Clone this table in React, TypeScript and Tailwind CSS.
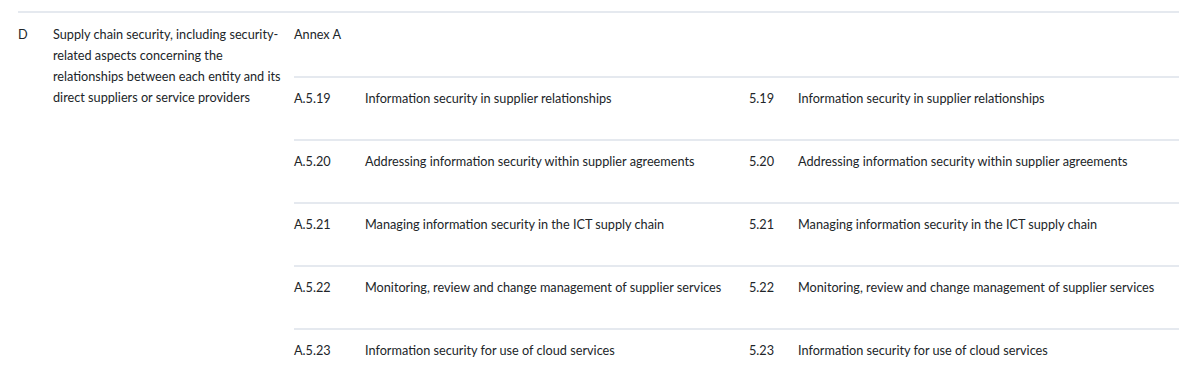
import React from "react";

const rows = [
  {
    code: "A.5.19",
    title: "Information security in supplier relationships",
    num: "5.19",
    title2: "Information security in supplier relationships",
  },
  {
    code: "A.5.20",
    title: "Addressing information security within supplier agreements",
    num: "5.20",
    title2: "Addressing information security within supplier agreements",
  },
  {
    code: "A.5.21",
    title: "Managing information security in the ICT supply chain",
    num: "5.21",
    title2: "Managing information security in the ICT supply chain",
  },
  {
    code: "A.5.22",
    title: "Monitoring, review and change management of supplier services",
    num: "5.22",
    title2: "Monitoring, review and change management of supplier services",
  },
  {
    code: "A.5.23",
    title: "Information security for use of cloud services",
    num: "5.23",
    title2: "Information security for use of cloud services",
  },
];

export default function App() {
  return (
    <div
      className="min-h-[390px] bg-white pt-[11px] text-[12.7px] leading-[21px] text-[#212529]"
      style={{ fontFamily: "Lato, 'Liberation Sans', sans-serif" }}
    >
      <div className="ml-[18px] w-[1161px] border-t-2 border-[#e5e9ef]">
        <div className="flex">
          {/* Category letter */}
          <div className="w-[35px] shrink-0 pt-[11px]">D</div>

          {/* Requirement text */}
          <div className="w-[241px] shrink-0 pt-[11px] pr-[8px]">
            Supply chain security, including security-related aspects
            concerning the relationships between each entity and its direct
            suppliers or service providers
          </div>

          {/* Mapped controls */}
          <div className="flex-1">
            <div className="pt-[11px] pb-[31px]">Annex A</div>
            {rows.map((row) => (
              <div
                key={row.code}
                className="flex border-t-2 border-[#e5e9ef] pt-[10px] pb-[30px]"
              >
                <div className="w-[71px] shrink-0">{row.code}</div>
                <div className="w-[384px] shrink-0">{row.title}</div>
                <div className="w-[49px] shrink-0">{row.num}</div>
                <div className="flex-1">{row.title2}</div>
              </div>
            ))}
          </div>
        </div>
      </div>
    </div>
  );
}
